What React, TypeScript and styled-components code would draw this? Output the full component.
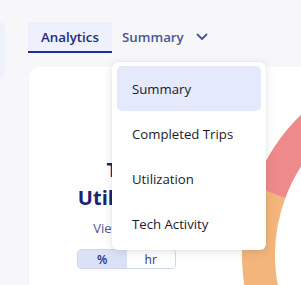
import React from "react";
import styled, { createGlobalStyle } from "styled-components";

const Global = createGlobalStyle`
  html, body { margin: 0; padding: 0; }
  body {
    background: #f7f7fa;
    overflow: hidden;
    font-family: "Open Sans", "Noto Sans", sans-serif;
  }
`;

const Page = styled.div`
  display: flex;
  align-items: flex-start;
  height: 285px;
`;

const SidePanel = styled.div`
  flex: none;
  width: 5px;
  height: 55px;
  margin-top: 22px;
  background: #eef1fc;
  border-radius: 0 8px 8px 0;
`;

const Main = styled.div`
  flex: 1;
  margin-left: 23px;
  display: flex;
  flex-direction: column;
  height: 100%;
  min-width: 0;
`;

const TabBar = styled.div`
  display: flex;
  align-items: stretch;
  margin-top: 22px;
  height: 31px;
`;

const Tab = styled.div<{ $active?: boolean }>`
  position: relative;
  display: flex;
  align-items: center;
  justify-content: ${(p) => (p.$active ? "center" : "flex-start")};
  gap: 12px;
  box-sizing: border-box;
  padding: ${(p) => (p.$active ? "0" : "0 0 0 10px")};
  background: ${(p) => (p.$active ? "#eef1fd" : "transparent")};
  border-bottom: 2px solid ${(p) => (p.$active ? "#1f2d9e" : "transparent")};
  color: ${(p) => (p.$active ? "#1e2a7c" : "#4a5596")};
  font-size: 13.3px;
  font-weight: 600;
  width: ${(p) => (p.$active ? "84px" : "auto")};
`;

const Chevron = styled.svg`
  width: 12px;
  height: 8px;
  margin-top: 1px;
`;

const Menu = styled.div`
  position: absolute;
  left: 0;
  top: 40px;
  width: 154px;
  box-sizing: border-box;
  padding: 4px 5px;
  background: #ffffff;
  border-radius: 6px;
  box-shadow: 0 2px 10px rgba(30, 35, 70, 0.13), 0 0 1px rgba(30, 35, 70, 0.15);
  display: flex;
  flex-direction: column;
  z-index: 5;
`;

const MenuItem = styled.div<{ $selected?: boolean }>`
  height: 45px;
  display: flex;
  align-items: center;
  padding-left: 15px;
  border-radius: 5px;
  background: ${(p) => (p.$selected ? "#e4e9fb" : "transparent")};
  color: #1b1b1f;
  font-size: 13.2px;
  font-weight: 400;
`;

const Card = styled.div`
  margin-top: 14px;
  margin-left: 1px;
  flex: 1;
  background: #ffffff;
  border-radius: 12px 0 0 0;
  overflow: hidden;
  display: flex;
  align-items: flex-start;
`;

const InfoColumn = styled.div`
  flex: none;
  width: 150px;
  margin-left: 26px;
  padding-top: 89px;
  display: flex;
  flex-direction: column;
  align-items: center;
`;

const Title = styled.div`
  font-size: 20px;
  line-height: 28px;
  font-weight: 700;
  color: #1a2370;
  text-align: center;
`;

const ViewLabel = styled.div`
  margin-top: 7px;
  font-size: 13px;
  line-height: 18px;
  color: #4a5596;
`;

const Toggle = styled.div`
  margin-top: 12px;
  margin-right: 7px;
  display: flex;
  width: 99px;
  height: 20px;
  box-sizing: border-box;
  border: 1px solid #cfd6ee;
  border-radius: 4px;
  overflow: hidden;
`;

const ToggleOption = styled.div<{ $on?: boolean }>`
  flex: 1;
  display: flex;
  align-items: center;
  justify-content: center;
  font-size: 12px;
  font-weight: ${(p) => (p.$on ? 600 : 400)};
  color: #2a3480;
  background: ${(p) => (p.$on ? "#dbe2f8" : "#ffffff")};
`;

const ChartArea = styled.svg`
  flex: none;
  margin-left: 24px;
  width: 300px;
  height: 300px;
`;

function arc(cx: number, cy: number, r: number, a0: number, a1: number) {
  const rad = (d: number) => (d * Math.PI) / 180;
  const x0 = cx + r * Math.cos(rad(a0));
  const y0 = cy + r * Math.sin(rad(a0));
  const x1 = cx + r * Math.cos(rad(a1));
  const y1 = cy + r * Math.sin(rad(a1));
  const large = a1 - a0 > 180 ? 1 : 0;
  return `M ${x0} ${y0} A ${r} ${r} 0 ${large} 1 ${x1} ${y1}`;
}

export default function App() {
  const items = ["Summary", "Completed Trips", "Utilization", "Tech Activity"];
  return (
    <>
      <Global />
      <Page>
        <SidePanel />
        <Main>
          <TabBar>
            <Tab $active>Analytics</Tab>
            <Tab>
              Summary
              <Chevron viewBox="0 0 12 8">
                <path d="M1.5 1.5 L6 6 L10.5 1.5" fill="none" stroke="#4a5596" strokeWidth="1.8" strokeLinecap="round" strokeLinejoin="round" />
              </Chevron>
              <Menu>
                {items.map((it, i) => (
                  <MenuItem key={it} $selected={i === 0}>
                    {it}
                  </MenuItem>
                ))}
              </Menu>
            </Tab>
          </TabBar>
          <Card>
            <InfoColumn>
              <Title>
                Tech
                <br />
                Utilization
              </Title>
              <ViewLabel>View by unit</ViewLabel>
              <Toggle>
                <ToggleOption $on>%</ToggleOption>
                <ToggleOption>hr</ToggleOption>
              </Toggle>
            </InfoColumn>
            <ChartArea viewBox="0 0 300 300">
              <path d={arc(209, 188, 179.5, 90, 200.4)} fill="none" stroke="#f3b57b" strokeWidth="33" />
              <path d={arc(209, 188, 179.5, 200.4, 340)} fill="none" stroke="#ee8a8a" strokeWidth="33" />
            </ChartArea>
          </Card>
        </Main>
      </Page>
    </>
  );
}
